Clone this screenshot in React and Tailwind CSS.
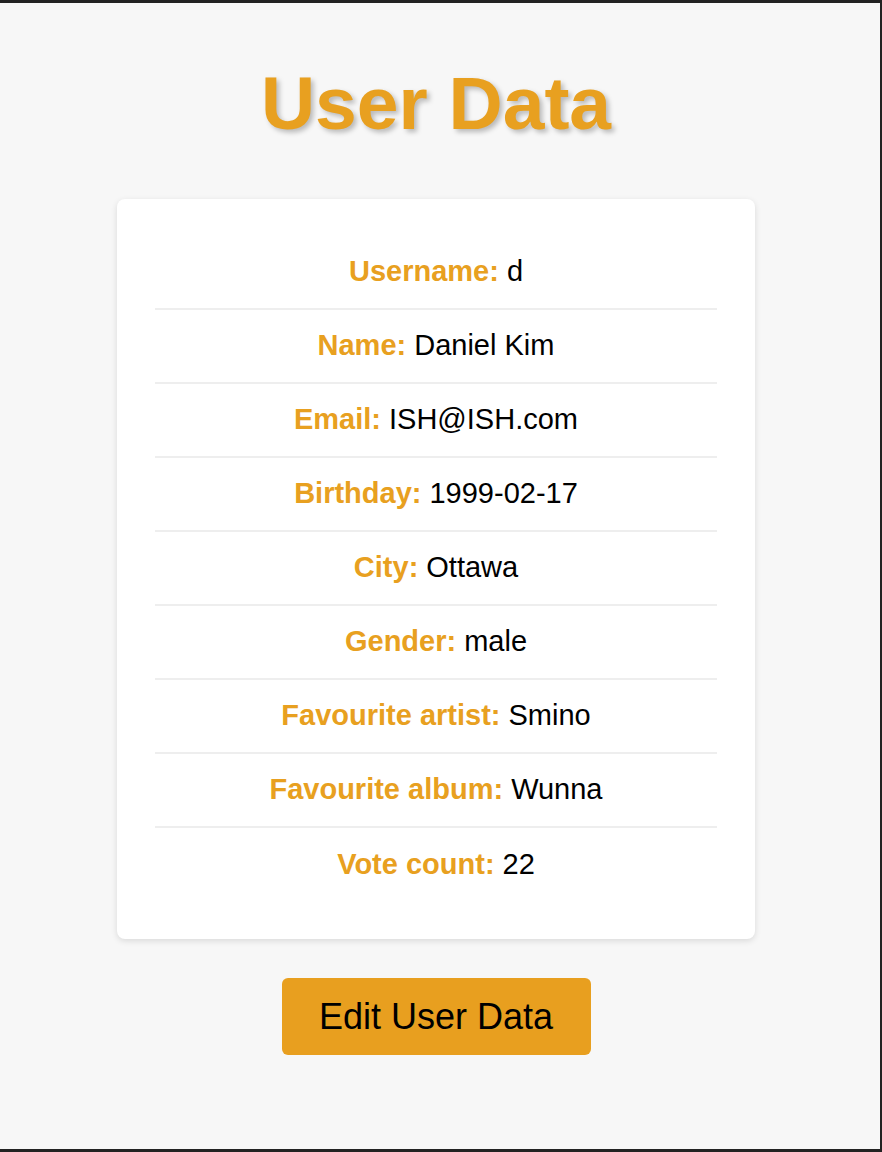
const fields = [
  ['Username', 'd'],
  ['Name', 'Daniel Kim'],
  ['Email', 'ISH@ISH.com'],
  ['Birthday', '1999-02-17'],
  ['City', 'Ottawa'],
  ['Gender', 'male'],
  ['Favourite artist', 'Smino'],
  ['Favourite album', 'Wunna'],
  ['Vote count', '22'],
];

export default function App() {
  return (
    <div className="h-[1152px] bg-[#f7f7f7] border-t-[3px] border-r-2 border-b-[3px] border-l-0 border-[#222] pr-2 flex flex-col items-center font-['Liberation_Sans',Arial,sans-serif]">
      <h1 className="mt-[63px] text-[75px] leading-none font-bold text-[#e8a020] [text-shadow:3px_3px_5px_rgba(0,0,0,0.25)]">
        User Data
      </h1>

      <div className="mt-[58px] w-[638px] bg-white rounded-lg shadow-[0_2px_6px_rgba(0,0,0,0.12)] px-[38px] py-[37px]">
        {fields.map(([label, value], i) => (
          <div
            key={label}
            className={`h-[74px] flex items-center justify-center text-[29px] ${i < fields.length - 1 ? 'border-b-2 border-[#eeeeee]' : ''}`}
          >
            <span className="font-bold text-[#e8a020]">{label}:</span>
            <span className="ml-2 text-black">{value}</span>
          </div>
        ))}
      </div>

      <button className="mt-[39px] h-[77px] w-[309px] rounded-md bg-[#e89f1f] text-[36px] text-black">
        Edit User Data
      </button>
    </div>
  );
}
